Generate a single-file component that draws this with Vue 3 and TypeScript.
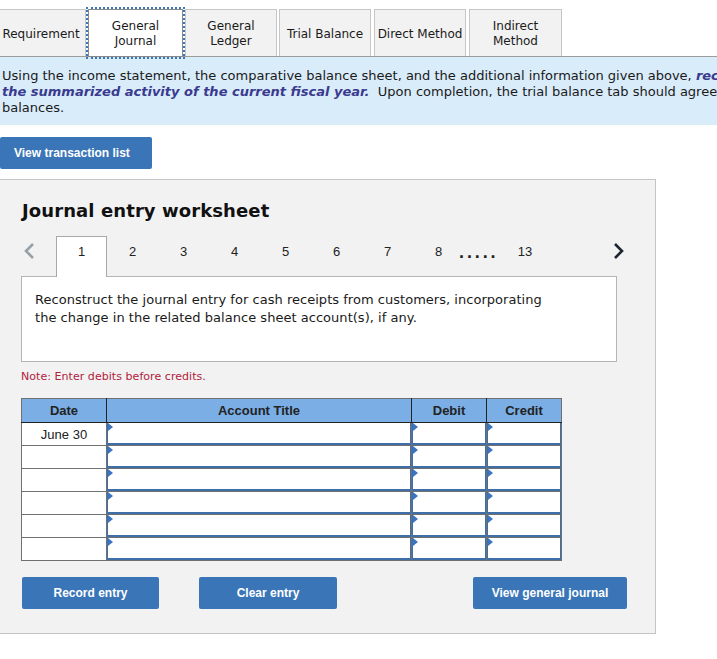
<script setup lang="ts">
const tabs = [
  { label: 'Requirement', w: 90, active: false },
  { label: 'General Journal', w: 95, active: true },
  { label: 'General Ledger', w: 92, active: false },
  { label: 'Trial Balance', w: 92, active: false },
  { label: 'Direct Method', w: 92, active: false },
  { label: 'Indirect Method', w: 93, active: false },
]
const steps = ['2', '3', '4', '5', '6', '7', '8']
const rows = ['June 30', '', '', '', '', '']
</script>

<template>
  <main class="page">
    <nav class="tabs">
      <button
        v-for="t in tabs"
        :key="t.label"
        class="tab"
        :class="{ active: t.active }"
        :style="{ width: t.w + 'px' }"
      >{{ t.label }}</button>
    </nav>
    <section class="banner">
      <p>Using the income statement, the comparative balance sheet, and the additional information given above, <b>reconstruct</b></p>
      <p><b>the summarized activity of the current fiscal year.</b>&nbsp; Upon completion, the trial balance tab should agree with the ending</p>
      <p>balances.</p>
    </section>
    <button class="btn list-btn">View transaction list</button>

    <section class="panel">
      <h2>Journal entry worksheet</h2>
      <div class="pager">
        <svg class="chev" width="12" height="18" viewBox="0 0 12 18"><path d="M10 2 3 9l7 7" fill="none" stroke="#98a0a8" stroke-width="2.6" /></svg>
        <div class="step current">1</div>
        <div v-for="s in steps" :key="s" class="step">{{ s }}</div>
        <div class="dots">.....</div>
        <div class="step last">13</div>
        <svg class="chev next" width="12" height="18" viewBox="0 0 12 18"><path d="M2 2l7 7-7 7" fill="none" stroke="#1c2530" stroke-width="2.6" /></svg>
      </div>
      <div class="desc">
        Reconstruct the journal entry for cash receipts from customers, incorporating<br />
        the change in the related balance sheet account(s), if any.
      </div>
      <p class="note">Note: Enter debits before credits.</p>
      <table class="grid">
        <thead>
          <tr><th class="c1">Date</th><th class="c2">Account Title</th><th class="c3">Debit</th><th class="c4">Credit</th></tr>
        </thead>
        <tbody>
          <tr v-for="(r, i) in rows" :key="i">
            <td class="date">{{ r }}</td>
            <td class="input"><i></i></td>
            <td class="input"><i></i></td>
            <td class="input"><i></i></td>
          </tr>
        </tbody>
      </table>
      <div class="actions">
        <button class="btn record">Record entry</button>
        <button class="btn clear">Clear entry</button>
        <button class="btn view">View general journal</button>
      </div>
    </section>
  </main>
</template>

<style>
html, body { margin: 0; background: #fff; overflow: hidden; }
</style>

<style scoped>
.page {
  width: 717px;
  height: 659px;
  overflow: hidden;
  padding-top: 9px;
  box-sizing: border-box;
  font-family: "DejaVu Sans", Verdana, sans-serif;
  color: #1a1a1a;
}
.tabs {
  display: flex;
  gap: 2px;
  height: 47px;
  margin-left: -4px;
  border-bottom: 1px solid #9c9c9c;
  box-sizing: content-box;
}
.tab {
  height: 47px;
  padding: 2px 2px 0;
  flex: none;
  box-sizing: border-box;
  background: #f2f2f2;
  border: 1px solid #c6c6c6;
  border-bottom: 0;
  font: 12px/15px "DejaVu Sans", Verdana, sans-serif;
  color: #1a1a1a;
  text-align: center;
}
.tab.active {
  position: relative;
  background: #fff;
  border: 1px solid #8a8a8a;
  outline: 2px dotted #3a75b8;
  outline-offset: 0;
  height: 48px;
}
.tab:nth-child(4) { margin-right: 1px; }
.tab:nth-child(5) { margin-right: 1px; }
.banner {
  height: 68px;
  box-sizing: border-box;
  padding: 11px 0 0 2px;
  background: #d9ecfa;
  font-size: 13px;
  line-height: 16px;
  white-space: nowrap;
  overflow: hidden;
}
.banner p { margin: 0; }
.banner b { font-style: italic; color: #3a3a8e; }
.btn {
  display: block;
  height: 32px;
  padding: 0;
  border: 0;
  border-radius: 2px;
  background: #3a75b8;
  color: #fff;
  font: bold 12px "Liberation Sans", Arial, sans-serif;
}
.list-btn {
  width: 152px;
  margin-top: 12px;
  padding-left: 14px;
  text-align: left;
}
.panel {
  width: 657px;
  height: 455px;
  margin: 10px 0 0 -1px;
  padding: 0 0 0 22px;
  box-sizing: border-box;
  background: #f2f2f2;
  border: 1px solid #c4c4c4;
  border-left: 0;
}
h2 {
  margin: 0;
  padding: 20px 0 0 1px;
  height: 56px;
  box-sizing: border-box;
  font-size: 18px;
  line-height: 22px;
  font-weight: bold;
  letter-spacing: 0.1px;
  color: #111;
}
.pager {
  display: flex;
  align-items: flex-start;
  height: 41px;
  position: relative;
  z-index: 1;
  font: 13px "Liberation Sans", Arial, sans-serif;
}
.chev { flex: none; margin: 6px 0 0 2px; }
.step {
  flex: none;
  width: 51px;
  height: 41px;
  padding-top: 8px;
  box-sizing: border-box;
  text-align: center;
  color: #222;
}
.current {
  margin-left: 21px;
  background: #fff;
  border: 1px solid #a8a8a8;
  border-bottom: 0;
  padding-top: 7px;
}
.dots {
  flex: none;
  width: 35px;
  margin-left: -5px;
  padding-top: 6px;
  font-size: 18px;
  font-weight: bold;
  letter-spacing: 2.9px;
  color: #222;
}
.last { width: 34px; margin-left: 14px; padding-top: 8px; }
.next { margin-left: 71px; margin-top: 6px; }
.desc {
  width: 596px;
  height: 86px;
  margin-top: -1px;
  padding: 14px 0 0 13px;
  box-sizing: border-box;
  background: #fff;
  border: 1px solid #b5b5b5;
  font-size: 13px;
  line-height: 18px;
  letter-spacing: 0.03px;
}
.note {
  margin: 8px 0 0;
  height: 28px;
  font-size: 11px;
  line-height: 14px;
  letter-spacing: 0.05px;
  color: #b0213c;
}
.grid {
  width: 541px;
  table-layout: fixed;
  border-collapse: collapse;
  font: 13px "Liberation Sans", Arial, sans-serif;
}
.c1 { width: 85px; }
.c2 { width: 305px; }
.c3 { width: 75px; }
.c4 { width: 75px; }
th {
  height: 24px;
  padding: 0;
  box-sizing: border-box;
  background: #7aaee5;
  border: 1px solid #222;
  border-top: 1px solid #707070;
  font-weight: bold;
  color: #222;
}
th.c1 { border-left: 1px solid #707070; }
th.c4 { border-right: 1px solid #707070; }
td {
  height: 23px;
  padding: 1px 0 0;
  box-sizing: border-box;
  border: 1px solid #707070;
  background: #fff;
}
td.date { text-align: center; color: #222; }
td.input {
  position: relative;
  box-shadow: inset 1px 0 #3f6fa8, inset -1px 0 #3f6fa8, inset 0 -2px #3f6fa8;
}
td.input i {
  position: absolute;
  left: 1px;
  top: 0;
  width: 0;
  height: 0;
  border-left: 5px solid #3a75c4;
  border-top: 4px solid transparent;
  border-bottom: 4px solid transparent;
}
.actions {
  display: flex;
  margin-top: 16px;
}
.actions .btn { text-align: center; }
.record { width: 137px; margin-left: 1px; }
.clear { width: 138px; margin-left: 40px; }
.view { width: 154px; margin-left: 136px; }
</style>
